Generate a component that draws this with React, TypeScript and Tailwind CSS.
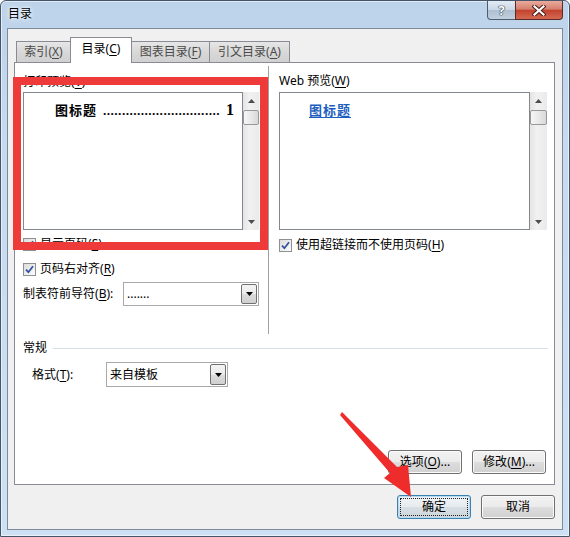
import React from "react";

function Key({ pre, k, post = "" }: { pre: string; k: string; post?: string }) {
  return (
    <span className="whitespace-nowrap">
      {pre}(<span className="underline decoration-1 underline-offset-[2px]">{k}</span>){post}
    </span>
  );
}

function CheckBox() {
  return (
    <span className="flex h-[13px] w-[13px] shrink-0 items-center justify-center border border-[#8e8f8f] bg-[linear-gradient(135deg,#dcdcdc,#fdfdfd)]">
      <svg width="9" height="9" viewBox="0 0 9 9">
        <path d="M1 4.6 L3.4 7.2 L8 1.2" stroke="#3552a0" strokeWidth="1.8" fill="none" />
      </svg>
    </span>
  );
}

function Arrow({ up }: { up?: boolean }) {
  return (
    <svg width="7" height="4" viewBox="0 0 7 4">
      <path d={up ? "M0 4h7L3.5 0z" : "M0 0h7L3.5 4z"} fill="#4d4d4d" />
    </svg>
  );
}

function Scrollbar({ wide }: { wide?: boolean }) {
  return (
    <div
      className={`flex shrink-0 flex-col bg-[linear-gradient(90deg,#e4e4e4,#f1f1f1_40%,#eaeaea)] ${
        wide ? "w-[17px]" : "w-[16px]"
      }`}
    >
      <div className="flex h-[18px] items-center justify-center">
        <Arrow up />
      </div>
      <div className="h-[15px] rounded-[2px] border border-[#989898] bg-[linear-gradient(90deg,#f6f6f6,#e9e9e9_50%,#d8d8d8)]" />
      <div className="flex-1" />
      <div className="flex h-[17px] items-center justify-center">
        <Arrow />
      </div>
    </div>
  );
}

function Dropdown({ value, className }: { value: string; className: string }) {
  return (
    <div className={`flex items-center border border-[#a9a9a9] bg-white ${className}`}>
      <span className="flex-1 whitespace-nowrap pl-[3px]">{value}</span>
      <span className="mr-px flex h-[calc(100%-2px)] w-[16px] items-center justify-center rounded-[2px] border border-[#707070] bg-[linear-gradient(180deg,#f3f3f3,#ebebeb_50%,#dcdcdc_50%,#d0d0d0)]">
        <svg width="7" height="4" viewBox="0 0 7 4">
          <path d="M0 0h7L3.5 4z" fill="#000" />
        </svg>
      </span>
    </div>
  );
}

function Button({ children, isDefault }: { children: React.ReactNode; isDefault?: boolean }) {
  return (
    <div
      className={`flex h-[24px] w-[74px] items-center justify-center rounded-[3px] border ${
        isDefault
          ? "border-[#3c7fb1] bg-[linear-gradient(180deg,#f0f4f7,#e6ebef_50%,#d8dfe4_50%,#cdd6dc)] shadow-[inset_0_0_0_1px_#b6dcf3]"
          : "border-[#707070] bg-[linear-gradient(180deg,#f2f2f2,#ebebeb_50%,#dddddd_50%,#d1d1d1)] shadow-[inset_0_0_0_1px_#fbfbfb]"
      }`}
    >
      {isDefault ? (
        <span className="flex h-[18px] w-[68px] items-center justify-center border border-dotted border-[#222]">
          {children}
        </span>
      ) : (
        children
      )}
    </div>
  );
}

function Tab({ label, k, width, active }: { label: string; k: string; width: string; active?: boolean }) {
  return (
    <div
      className={`flex items-center justify-center border border-b-0 border-[#898c95] ${width} ${
        active
          ? "relative z-10 -mb-px h-[26px] bg-white pb-[3px] text-black"
          : "h-[21px] bg-[linear-gradient(180deg,#e6e6e6,#d8d8d8_50%,#d0d0d0)] text-[#4a4a4a]"
      }`}
    >
      <Key pre={label} k={k} />
    </div>
  );
}

export default function App() {
  return (
    <div className="relative h-[537px] w-[570px] overflow-hidden rounded-t-[6px] border border-[#46566a] bg-[linear-gradient(180deg,#bdd3ea_0%,#c7dbf0_30%,#cde0f4_100%)] font-['Noto_Sans','Noto_Sans_CJK_SC',sans-serif] text-[12px] leading-[16px] text-black shadow-[inset_0_0_0_1px_rgba(255,255,255,0.55)]">
      {/* title bar */}
      <div className="flex h-[27px] items-start">
        <span className="ml-[7px] mt-[5px] [text-shadow:0_0_6px_#fff,0_0_3px_#fff]">目录</span>
        <div className="ml-auto mr-[6px] flex">
          <div className="flex h-[19px] w-[29px] items-center justify-center rounded-bl-[4px] border border-t-0 border-[#4c5d72] bg-[linear-gradient(180deg,#e3ebf4_0%,#cad7e5_50%,#aebfd2_52%,#c2d0df_100%)]">
            <span className="text-[13px] font-bold leading-none text-white [text-shadow:0_0_1px_#1d2a3a,0_0_1px_#1d2a3a,0_0_1px_#1d2a3a]">
              ?
            </span>
          </div>
          <div className="-ml-px flex h-[19px] w-[48px] items-center justify-center rounded-br-[4px] border border-t-0 border-[#5b2a24] bg-[linear-gradient(180deg,#e9ab9d_0%,#d5806f_45%,#c3432f_52%,#d46a52_100%)]">
            <svg width="14" height="11" viewBox="0 0 14 11">
              <path d="M2.5 1.5 L11.5 9.5 M11.5 1.5 L2.5 9.5" stroke="#4a1d17" strokeWidth="4.2" strokeLinecap="square" />
              <path d="M2.5 1.5 L11.5 9.5 M11.5 1.5 L2.5 9.5" stroke="#fff" strokeWidth="2.2" strokeLinecap="square" />
            </svg>
          </div>
        </div>
      </div>

      {/* client area */}
      <div className="mx-[6px] flex h-[502px] flex-col border border-[#7d8a99] bg-[#f0f0f0]">
        {/* tabs */}
        <div className="flex h-[33px] items-end pl-[8px]">
          <Tab label="索引" k="X" width="w-[55px]" />
          <div className="-ml-px">
            <Tab label="目录" k="C" width="w-[62px]" active />
          </div>
          <div className="-ml-px">
            <Tab label="图表目录" k="F" width="w-[79px]" />
          </div>
          <div className="-ml-px">
            <Tab label="引文目录" k="A" width="w-[81px]" />
          </div>
        </div>

        {/* tab page */}
        <div className="ml-[6px] mr-[7px] flex h-[423px] flex-col border border-[#898c95] bg-white">
          <div className="flex h-[271px] pl-[8px]">
            {/* print preview column */}
            <div className="flex w-[236px] flex-col">
              <div className="mt-[11px] h-[16px]">
                <Key pre="打印预览" k="V" />
              </div>
              <div className="mt-[2px] flex h-[138px]">
                <div className="w-[220px] border border-[#828790] bg-white">
                  <div className="flex items-baseline justify-between pl-[31px] pr-[8px] pt-[9px] font-bold">
                    <span className="text-[13px] tracking-[1px]">图标题</span>
                    <span className="whitespace-nowrap text-[12px] tracking-[0.4px]">
                      {".".repeat(31)}
                    </span>
                    <span className="font-['Liberation_Serif',serif] text-[16px]">1</span>
                  </div>
                </div>
                <Scrollbar />
              </div>
              <div className="mt-[6px] flex h-[16px] items-center gap-[4px]">
                <CheckBox />
                <Key pre="显示页码" k="S" />
              </div>
              <div className="mt-[9px] flex h-[16px] items-center gap-[4px]">
                <CheckBox />
                <Key pre="页码右对齐" k="R" />
              </div>
              <div className="mt-[5px] flex h-[24px] items-center justify-between">
                <Key pre="制表符前导符" k="B" post=":" />
                <Dropdown value="......." className="h-[24px] w-[136px]" />
              </div>
            </div>

            {/* separator */}
            <div className="ml-[9px] mt-[3px] w-px bg-[#a0a0a0]" />

            {/* web preview column */}
            <div className="ml-[10px] flex w-[268px] flex-col">
              <div className="mt-[10px] h-[16px]">
                Web <Key pre="预览" k="W" />
              </div>
              <div className="mt-[3px] flex h-[138px]">
                <div className="w-[251px] border border-[#828790] bg-white">
                  <div className="pl-[29px] pt-[9px]">
                    <span className="text-[13px] font-bold tracking-[1px] text-[#1c5fbf] underline decoration-1 underline-offset-[2px]">
                      图标题
                    </span>
                  </div>
                </div>
                <Scrollbar wide />
              </div>
              <div className="mt-[7px] flex h-[16px] items-center gap-[4px]">
                <CheckBox />
                <Key pre="使用超链接而不使用页码" k="H" />
              </div>
            </div>
          </div>

          {/* general group */}
          <div className="mt-[6px] flex h-[16px] items-center pl-[8px] pr-[6px]">
            <span>常规</span>
            <div className="ml-[6px] h-px flex-1 bg-[#d5dfe5]" />
          </div>
          <div className="mt-[6px] flex h-[25px] items-center pl-[17px]">
            <span className="w-[74px]">
              <Key pre="格式" k="T" post=":" />
            </span>
            <Dropdown value="来自模板" className="h-[25px] w-[122px]" />
          </div>

          <div className="mb-[10px] mt-auto flex justify-end gap-[10px] pr-[8px]">
            <Button>
              <Key pre="选项" k="O" post="..." />
            </Button>
            <Button>
              <Key pre="修改" k="M" post="..." />
            </Button>
          </div>
        </div>

        {/* dialog buttons */}
        <div className="mt-[10px] flex justify-end gap-[10px] pr-[7px]">
          <Button isDefault>确定</Button>
          <Button>取消</Button>
        </div>
      </div>

      {/* red highlight box */}
      <div className="absolute left-[12px] top-[76px] h-[173px] w-[255px] border-[8px] border-[#ef3a3a]" />

      {/* red arrow */}
      <svg className="absolute left-[-1px] top-[-1px]" width="570" height="537" viewBox="0 0 570 537">
        <polygon points="340,415 342,412 397,467 408,465 411,497 384,478 390,473" fill="#ee2c2c" />
      </svg>
    </div>
  );
}
